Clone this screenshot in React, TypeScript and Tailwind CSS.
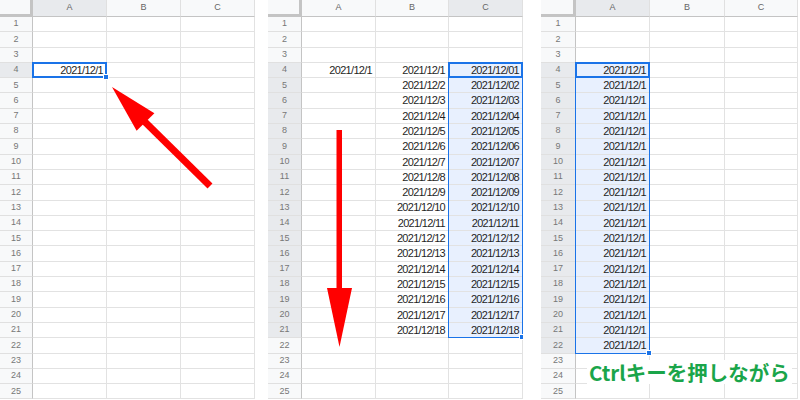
import React from 'react';

type Sel = { col: number; r1: number; r2: number };

type SheetProps = {
  widths: number[];
  widthCls: string[];
  cell: (row: number, col: number) => string;
  sel: Sel;
  filled: boolean;
};

const ROW = 15.3;
const HEAD = 17;
const ROWS = Array.from({ length: 25 }, (_, i) => i + 1);
const LETTERS = ['A', 'B', 'C'];

function Sheet({ widths, widthCls, cell, sel, filled }: SheetProps) {
  const left = widths.slice(0, sel.col + 1).reduce((a, b) => a + b, 0);
  const top = HEAD + (sel.r1 - 1) * ROW;
  const w = widths[sel.col + 1];
  const h = (sel.r2 - sel.r1 + 1) * ROW;
  const inSel = (r: number, c: number) => c === sel.col && r >= sel.r1 && r <= sel.r2;

  return (
    <div className="relative h-[400px] shrink-0 overflow-hidden">
      {/* header row */}
      <div className="flex h-[17px]">
        <div className={`${widthCls[0]} h-[17px] bg-[#f8f9fa] border-r-[3px] border-b-[3px] border-[#c4c4c4]`} />
        {LETTERS.map((l, c) => (
          <div
            key={l}
            className={`${widthCls[c + 1]} h-[17px] flex items-center justify-center border-r border-b border-r-[#e0e0e0] border-b-[#c4c4c4] text-[9px] text-[#666] ${c === sel.col ? 'bg-[#e8eaed]' : 'bg-[#f8f9fa]'}`}
          >
            {l}
          </div>
        ))}
      </div>
      {ROWS.map((r) => (
        <div key={r} className="flex h-[15.3px]">
          <div
            className={`${widthCls[0]} h-full flex items-center justify-center border-r border-b border-r-[#c4c4c4] border-b-[#e0e0e0] text-[9px] text-[#777] ${r >= sel.r1 && r <= sel.r2 ? 'bg-[#e8eaed]' : 'bg-[#f8f9fa]'}`}
          >
            {r}
          </div>
          {LETTERS.map((l, c) => (
            <div
              key={l}
              className={`${widthCls[c + 1]} h-full flex items-center justify-end pr-[3px] border-r border-b border-[#e2e2e2] text-[11px] tracking-[-0.7px] text-[#1f1f1f] ${filled && inSel(r, c) ? 'bg-[#e8f0fe]' : 'bg-white'}`}
            >
              {cell(r, c)}
            </div>
          ))}
        </div>
      ))}
      {/* selection */}
      <div
        className="absolute border border-[#1a73e8] pointer-events-none"
        style={{ left: left - 1, top: top - 1, width: w + 1, height: h + 1 }}
      />
      <div
        className="absolute border-2 border-[#1a73e8] pointer-events-none"
        style={{ left: left - 1, top: top - 1, width: w + 1, height: ROW + 1 }}
      />
      <div
        className="absolute w-[6px] h-[6px] bg-[#1a73e8] border border-white pointer-events-none"
        style={{ left: left + w - 4, top: top + h - 4 }}
      />
    </div>
  );
}

export default function App() {
  return (
    <div className="relative w-[800px] h-[400px] bg-white overflow-hidden flex font-['Liberation_Sans',Arial,sans-serif]">
      <Sheet
        widths={[33, 74, 74, 74]}
        widthCls={['w-[33px]', 'w-[74px]', 'w-[74px]', 'w-[74px]']}
        cell={(r, c) => (r === 4 && c === 0 ? '2021/12/1' : '')}
        sel={{ col: 0, r1: 4, r2: 4 }}
        filled={false}
      />
      <div className="w-[13px] shrink-0" />
      <Sheet
        widths={[34, 74, 73, 74]}
        widthCls={['w-[34px]', 'w-[74px]', 'w-[73px]', 'w-[74px]']}
        cell={(r, c) => {
          if (c === 0) return r === 4 ? '2021/12/1' : '';
          if (r < 4 || r > 21) return '';
          const d = r - 3;
          if (c === 1) return `2021/12/${d}`;
          return `2021/12/${String(d).padStart(2, '0')}`;
        }}
        sel={{ col: 2, r1: 4, r2: 21 }}
        filled={true}
      />
      <div className="w-[18px] shrink-0" />
      <Sheet
        widths={[35, 74, 75, 73]}
        widthCls={['w-[35px]', 'w-[74px]', 'w-[75px]', 'w-[73px]']}
        cell={(r, c) => (c === 0 && r >= 4 && r <= 22 ? '2021/12/1' : '')}
        sel={{ col: 0, r1: 4, r2: 22 }}
        filled={true}
      />

      {/* arrows */}
      <svg className="absolute left-0 top-0 pointer-events-none" width="800" height="400" viewBox="0 0 800 400">
        <line x1="210" y1="186" x2="143" y2="120" stroke="#ff0000" strokeWidth="7" />
        <polygon points="112,87 136.6,130.8 154.4,113.2" fill="#ff0000" />
        <rect x="336.5" y="130" width="5.5" height="160" fill="#ff0000" />
        <polygon points="327,288 352,288 339.5,347" fill="#ff0000" />
      </svg>

      <div className="absolute left-[587px] top-[360px] bg-white px-[2px] h-[24px] flex items-center whitespace-nowrap text-[20.5px] leading-none font-bold text-[#1aa54a] font-['Noto_Sans_CJK_JP','Noto_Sans',sans-serif]">
        Ctrlキーを押しながら
      </div>
    </div>
  );
}
